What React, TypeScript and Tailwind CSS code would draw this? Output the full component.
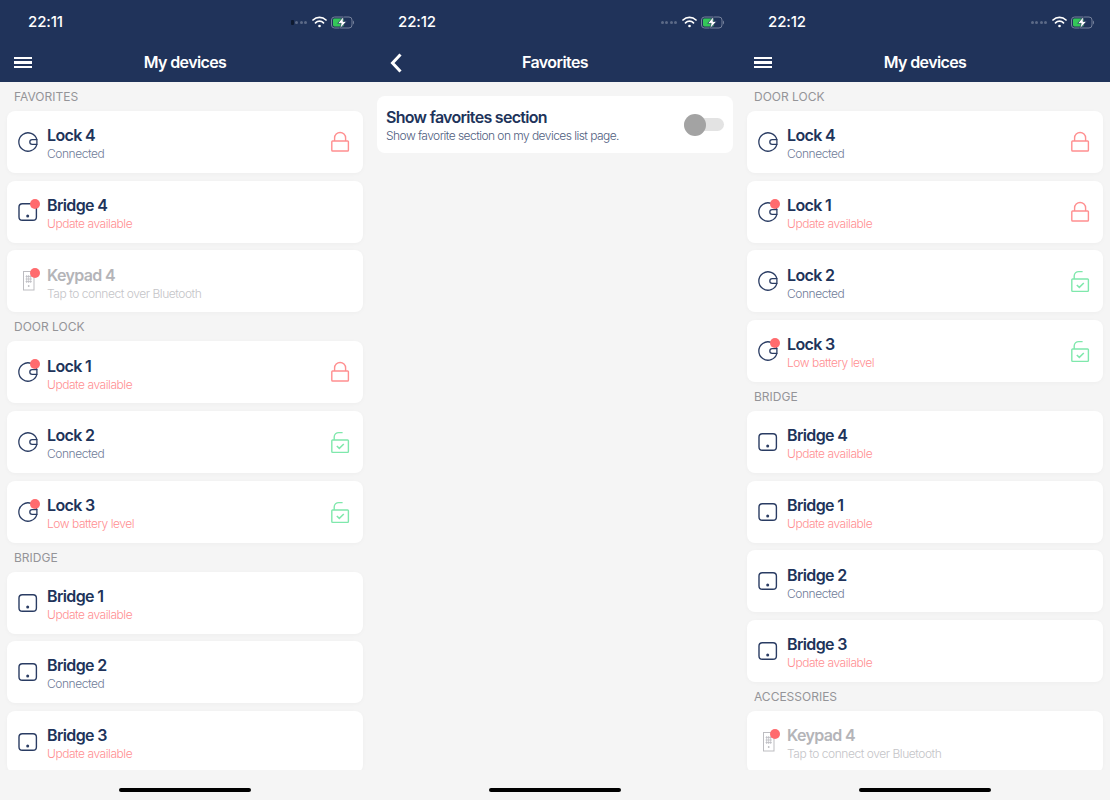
import React from "react";

type Kind = "lock" | "bridge" | "keypad";
type Row = { kind: Kind; name: string; sub: string; tone?: "alert" | "muted"; dot?: boolean; state?: "locked" | "open" };
type Item = { label: string } | Row;

function LockIcon() {
  return (
    <svg width="22" height="22" viewBox="0 0 22 22" fill="none" stroke="#2a3c63" strokeWidth="1.3">
      <path d="M19.9 8.6 A9.2 9.2 0 1 0 19.9 13.4" />
      <path d="M19.9 8.6 V13.4 H15.2 A2.4 2.4 0 0 1 15.2 8.6 Z" />
    </svg>
  );
}
function BridgeIcon() {
  return (
    <svg width="22" height="22" viewBox="0 0 22 22" fill="none" stroke="#2a3c63" strokeWidth="1.4">
      <rect x="2" y="2.7" width="17.4" height="16.6" rx="3.4" />
      <circle cx="10.7" cy="15" r="1.5" fill="#2a3c63" stroke="none" />
    </svg>
  );
}
function KeypadIcon() {
  return (
    <svg width="22" height="22" viewBox="0 0 22 22" fill="none" stroke="#bdbdc1" strokeWidth="1">
      <rect x="6.5" y="1.5" width="10.5" height="18.5" />
      <path d="M9.7 5 V13 M11.7 5 V13 M13.7 5 V13 M8.6 6.5 H14.8 M8.6 9 H14.8 M8.6 11.5 H14.8" strokeWidth="0.8" />
      <circle cx="11.7" cy="16" r="0.9" fill="#bdbdc1" stroke="none" />
    </svg>
  );
}
function ClosedLock() {
  return (
    <svg width="20" height="22" viewBox="0 0 20 22" fill="none" stroke="#ff8f90" strokeWidth="1.4">
      <rect x="1.8" y="10" width="16.6" height="10" rx="0.8" />
      <path d="M4.6 10 V7 A5.5 5.5 0 0 1 15.6 7 V10" />
    </svg>
  );
}
function OpenLock() {
  return (
    <svg width="20" height="24" viewBox="0 0 20 24" fill="none" stroke="#7fe8ac" strokeWidth="1.4">
      <rect x="1.8" y="10" width="16.6" height="12.4" rx="0.8" />
      <path d="M4.2 10 V7 A4.6 4.6 0 0 1 8.8 2.6 H12.6" />
      <path d="M6.8 16 L9.3 18.4 L13.8 14" strokeWidth="1.5" />
    </svg>
  );
}

function Card({ r }: { r: Row }) {
  const nameColor = r.tone === "muted" ? "text-[#b4b4b8]" : "text-[#20335a]";
  const subColor =
    r.tone === "alert" ? "text-[#ff8f92]" : r.tone === "muted" ? "text-[#c4c4c8]" : "text-[#6f7c98]";
  return (
    <div className="mx-[7px] mb-[7.67px] flex h-[62px] shrink-0 items-center rounded-[8px] bg-white pl-[10px] pr-[13px] shadow-[0_1px_4px_rgba(0,0,0,0.03)]">
      <div className="relative flex w-[22px] shrink-0 justify-center">
        {r.kind === "lock" && <LockIcon />}
        {r.kind === "bridge" && <BridgeIcon />}
        {r.kind === "keypad" && <KeypadIcon />}
        {r.dot && <span className="absolute right-[-1px] top-[-2px] h-[10px] w-[10px] rounded-full bg-[#ff6b6e]" />}
      </div>
      <div className="ml-[8px] min-w-0 flex-1 pt-[3.5px]">
        <div className={`text-[16px] font-semibold leading-[21px] tracking-[-0.65px] ${nameColor}`}>{r.name}</div>
        <div className={`text-[12px] font-light leading-[16px] tracking-[-0.45px] ${subColor}`}>{r.sub}</div>
      </div>
      {r.state === "locked" && <ClosedLock />}
      {r.state === "open" && <OpenLock />}
    </div>
  );
}

function Wifi() {
  return (
    <svg width="15" height="12" viewBox="0 0 15 12" fill="none" stroke="#fff" strokeWidth="1.7" strokeLinecap="round">
      <path d="M1 4 A9.4 9.4 0 0 1 14 4" />
      <path d="M3.5 6.8 A5.8 5.8 0 0 1 11.5 6.8" />
      <circle cx="7.5" cy="10" r="1.3" fill="#fff" stroke="none" />
    </svg>
  );
}
function Battery() {
  return (
    <svg width="24" height="13" viewBox="0 0 24 13" fill="none">
      <rect x="0.5" y="1" width="20.5" height="11" rx="3" stroke="#75819b" />
      <rect x="2" y="2.5" width="11" height="8" rx="1.4" fill="#34c759" />
      <path d="M22 4.5 C23.4 5 23.4 8 22 8.5 Z" fill="#75819b" />
      <path d="M12.6 0.3 L6.8 7.4 H10.2 L8.8 12.8 L15.6 5.4 H12 Z" fill="#fff" stroke="#20335a" strokeWidth="0.7" />
    </svg>
  );
}
function Signal({ first }: { first?: boolean }) {
  return (
    <div className="mr-[1px] flex items-center gap-[1.5px]">
      {first ? (
        <span className="h-[5px] w-[3px] rounded-[1px] bg-[#0e1a30]" />
      ) : (
        <span className="h-[3px] w-[3px] rounded-full bg-[#5c6a87]" />
      )}
      <span className="h-[3px] w-[3px] rounded-full bg-[#5c6a87]" />
      <span className="h-[3px] w-[3px] rounded-full bg-[#5c6a87]" />
      <span className="h-[3px] w-[3px] rounded-full bg-[#5c6a87]" />
    </div>
  );
}
function Menu() {
  return (
    <div className="flex w-[18px] flex-col gap-[2px]">
      <span className="h-[2.5px] bg-white" />
      <span className="h-[2.5px] bg-white" />
      <span className="h-[2.5px] bg-white" />
    </div>
  );
}
function Back() {
  return (
    <svg width="12" height="20" viewBox="0 0 12 20" fill="none" stroke="#fff" strokeWidth="3">
      <path d="M10.5 1.5 L2.5 10 L10.5 18.5" />
    </svg>
  );
}

function Phone({
  time,
  title,
  back,
  firstBar,
  children,
}: {
  time: string;
  title: string;
  back?: boolean;
  firstBar?: boolean;
  children: React.ReactNode;
}) {
  return (
    <div className="flex h-[800px] w-[370px] shrink-0 flex-col bg-[#f5f5f5]">
      <div className="h-[82px] shrink-0 bg-[#20335a] text-white">
        <div className="flex h-[44px] items-center pl-[28px] pr-[15px]">
          <span className="flex-1 text-[15px] font-medium tracking-[-0.1px]">{time}</span>
          <div className="flex items-center gap-[4px]">
            <Signal first={firstBar} />
            <Wifi />
            <Battery />
          </div>
        </div>
        <div className="relative flex h-[38px] items-center justify-center pb-[2px]">
          {back ? (
            <span className="absolute left-[20px] top-[9px]">
              <Back />
            </span>
          ) : (
            <span className="absolute left-[14px] top-[12.5px]">
              <Menu />
            </span>
          )}
          <span className="text-[16px] font-semibold tracking-[-0.6px]">{title}</span>
        </div>
      </div>
      <div className="flex h-[688px] shrink-0 flex-col overflow-hidden">{children}</div>
      <div className="flex flex-1 items-center justify-center">
        <span className="mt-[10px] h-[4px] w-[132px] rounded-full bg-black" />
      </div>
    </div>
  );
}

function List({ items }: { items: Item[] }) {
  return (
    <>
      <div className="h-[7.67px] shrink-0" />
      {items.map((it, i) =>
        "label" in it ? (
          <div key={i} className="flex h-[21.33px] shrink-0 items-start pl-[14px] pt-[0.4px] text-[12px] leading-[14px] text-[#949498]">
            {it.label}
          </div>
        ) : (
          <Card key={i} r={it} />
        )
      )}
    </>
  );
}

const U = "Update available";
const C = "Connected";
const K = "Tap to connect over Bluetooth";
const lock4: Row = { kind: "lock", name: "Lock 4", sub: C, state: "locked" };
const lock1: Row = { kind: "lock", name: "Lock 1", sub: U, tone: "alert", dot: true, state: "locked" };
const lock2: Row = { kind: "lock", name: "Lock 2", sub: C, state: "open" };
const lock3: Row = { kind: "lock", name: "Lock 3", sub: "Low battery level", tone: "alert", dot: true, state: "open" };
const bridge = (n: number, sub: string, dot = false): Row => ({
  kind: "bridge",
  name: `Bridge ${n}`,
  sub,
  tone: sub === U ? "alert" : undefined,
  dot,
});
const keypad: Row = { kind: "keypad", name: "Keypad 4", sub: K, tone: "muted", dot: true };

const left: Item[] = [
  { label: "FAVORITES" },
  lock4,
  bridge(4, U, true),
  keypad,
  { label: "DOOR LOCK" },
  lock1,
  lock2,
  lock3,
  { label: "BRIDGE" },
  bridge(1, U),
  bridge(2, C),
  bridge(3, U),
];
const right: Item[] = [
  { label: "DOOR LOCK" },
  lock4,
  lock1,
  lock2,
  lock3,
  { label: "BRIDGE" },
  bridge(4, U),
  bridge(1, U),
  bridge(2, C),
  bridge(3, U),
  { label: "ACCESSORIES" },
  keypad,
];

export default function App() {
  return (
    <div className="flex h-[800px] w-[1110px] overflow-hidden font-['Inter',sans-serif]">
      <Phone time="22:11" title="My devices" firstBar>
        <List items={left} />
      </Phone>
      <Phone time="22:12" title="Favorites" back>
        <div className="mx-[7px] mt-[14px] flex h-[57px] items-center justify-between rounded-[8px] bg-white pl-[9px] pr-[9px]">
          <div className="pt-[2px]">
            <div className="text-[16px] font-semibold leading-[21px] tracking-[-0.7px] text-[#20335a]">Show favorites section</div>
            <div className="text-[12px] font-light leading-[16px] tracking-[-0.55px] text-[#4f5e80]">
              Show favorite section on my devices list page.
            </div>
          </div>
          <div className="relative h-[13px] w-[40px] rounded-full bg-[#e3e3e3]">
            <span className="absolute left-0 top-[-4.5px] h-[22px] w-[22px] rounded-full bg-[#a3a3a3]" />
          </div>
        </div>
      </Phone>
      <Phone time="22:12" title="My devices">
        <List items={right} />
      </Phone>
    </div>
  );
}
